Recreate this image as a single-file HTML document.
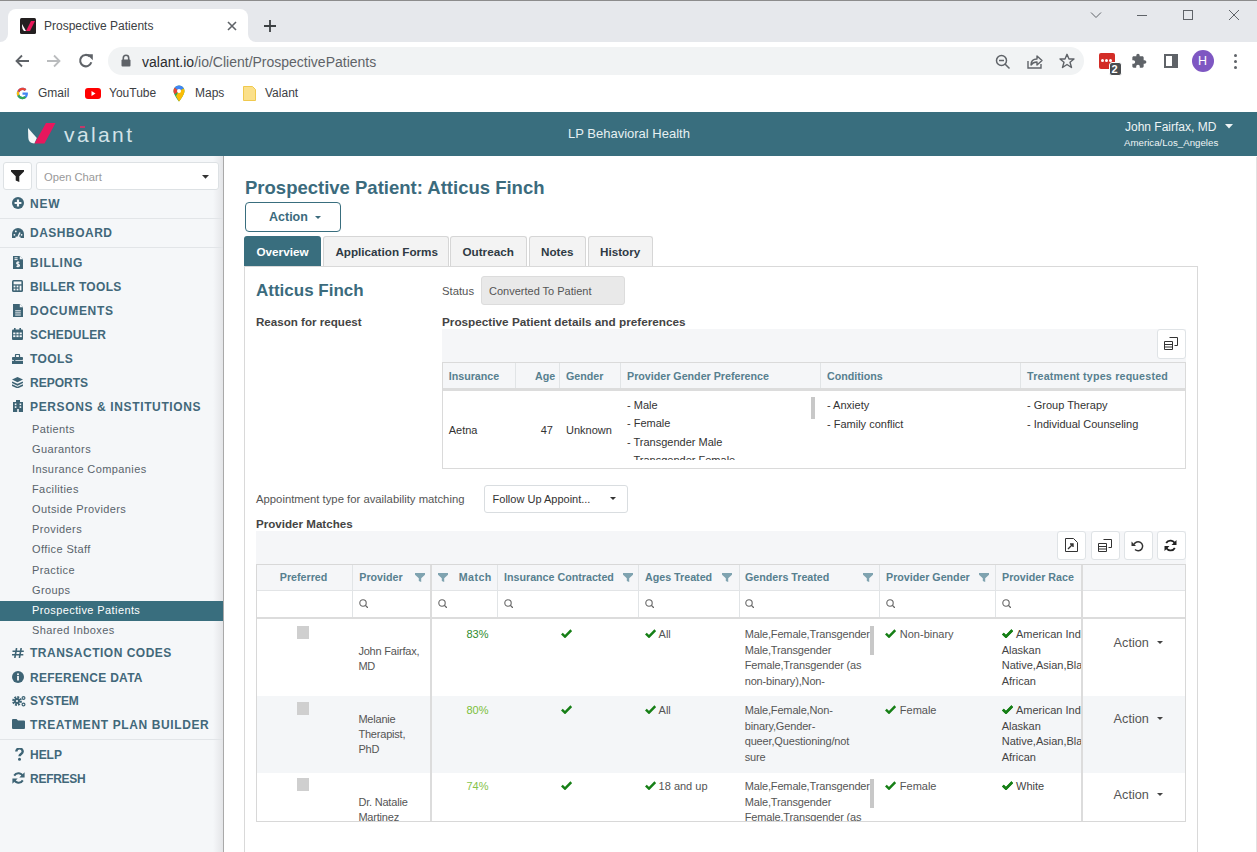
<!DOCTYPE html>
<html><head><meta charset="utf-8">
<style>
*{box-sizing:border-box;margin:0;padding:0}
html,body{width:1257px;height:852px;overflow:hidden;background:#fff;font-family:"Liberation Sans",sans-serif;position:relative}
.a{position:absolute}
.t{position:absolute;white-space:nowrap}
/* chrome */
#tabstrip{left:0;top:0;width:1257px;height:42px;background:#dee1e6;border-top:1px solid #9a9a9a}
#acttab{left:8px;top:8px;width:240px;height:34px;background:#fff;border-radius:8px 8px 0 0}
#toolbar{left:0;top:42px;width:1257px;height:36px;background:#fff}
#omni{left:108px;top:46px;width:977px;height:29px;background:#f1f3f4;border-radius:15px}
#bookmarks{left:0;top:78px;width:1257px;height:34px;background:#fff}
/* valant header */
#vhead{left:0;top:112px;width:1257px;height:44px;background:#3d6d7e}
#side{left:0;top:156px;width:223px;height:696px;background:#f3f5f7;border-right:1px solid #d5d8db}
.nav{position:absolute;left:30px;font-weight:bold;font-size:12px;color:#42687a;white-space:nowrap}
.sub{position:absolute;left:32px;font-size:11px;color:#59636b;letter-spacing:0.4px;white-space:nowrap}
.ico{position:absolute;left:12px}
</style></head>
<body>
<!-- CHROME -->
<div class="a" style="left:0;top:0;width:1257px;height:42px;background:#e6e8ec"></div>
<div class="a" style="left:0;top:0;width:1257px;height:1px;background:#8c8c8c"></div>
<div class="a" style="left:8px;top:9px;width:240px;height:33px;background:#fff;border-radius:8px 8px 0 0"></div>
<!-- tab bottom curves -->
<div class="a" style="left:0;top:34px;width:8px;height:8px;background:#fff"></div>
<div class="a" style="left:0;top:26px;width:8px;height:16px;background:#e6e8ec;border-radius:0 0 8px 0"></div>
<div class="a" style="left:248px;top:34px;width:8px;height:8px;background:#fff"></div>
<div class="a" style="left:248px;top:26px;width:8px;height:16px;background:#e6e8ec;border-radius:0 0 0 8px"></div>
<!-- favicon -->
<svg class="a" style="left:20px;top:18px" width="16" height="16" viewBox="0 0 16 16"><rect width="16" height="16" rx="1.5" fill="#231f20"/><path d="M2 6 L6 13 L4 13 Q2 11 2 8Z" fill="#fff"/><path d="M6 13 L11 3 L15 3 L10 13Z" fill="#e8185a"/></svg>
<div class="t" style="left:44px;top:19px;font-size:12px;color:#3c4043">Prospective Patients</div>
<svg class="a" style="left:227px;top:21px" width="10" height="10" viewBox="0 0 10 10"><path d="M1 1L9 9M9 1L1 9" stroke="#5f6368" stroke-width="1.6"/></svg>
<svg class="a" style="left:263px;top:19px" width="14" height="14" viewBox="0 0 14 14"><path d="M7 1V13M1 7H13" stroke="#3c4043" stroke-width="1.8"/></svg>
<!-- window controls -->
<svg class="a" style="left:1090px;top:11px" width="12" height="8" viewBox="0 0 12 8"><path d="M1 1.5L6 6.5L11 1.5" stroke="#5f6368" stroke-width="1" fill="none"/></svg>
<div class="a" style="left:1137px;top:15px;width:10px;height:1px;background:#5f6368"></div>
<div class="a" style="left:1183px;top:10px;width:10px;height:10px;border:1px solid #5f6368"></div>
<svg class="a" style="left:1228px;top:9px" width="12" height="12" viewBox="0 0 12 12"><path d="M1 1L11 11M11 1L1 11" stroke="#5f6368" stroke-width="1"/></svg>
<!-- toolbar -->
<svg class="a" style="left:14px;top:53px" width="16" height="16" viewBox="0 0 16 16"><path d="M15 8H2.5M8 2.5L2.5 8L8 13.5" stroke="#5f6368" stroke-width="1.8" fill="none"/></svg>
<svg class="a" style="left:46px;top:53px" width="16" height="16" viewBox="0 0 16 16"><path d="M1 8H13.5M8 2.5L13.5 8L8 13.5" stroke="#babcbe" stroke-width="1.8" fill="none"/></svg>
<svg class="a" style="left:78px;top:53px" width="16" height="16" viewBox="0 0 16 16"><path d="M13.3 9.3A5.7 5.7 0 1 1 11.8 3.5" stroke="#5f6368" stroke-width="2.1" fill="none"/><path d="M8.8 1.2H14.8V7.2Z" fill="#5f6368"/></svg>
<div class="a" style="left:108px;top:47px;width:976px;height:28px;background:#f1f3f4;border-radius:14px"></div>
<svg class="a" style="left:121px;top:54px" width="10" height="13" viewBox="0 0 10 13"><path d="M2.3 6V4A2.7 2.7 0 0 1 7.7 4V6" stroke="#5f6368" stroke-width="1.6" fill="none"/><rect x="0.5" y="5.5" width="9" height="7" rx="1" fill="#5f6368"/></svg>
<div class="t" style="left:142px;top:54px;font-size:14px;color:#2a2b2e">valant.io<span style="color:#5f6368">/io/Client/ProspectivePatients</span></div>
<svg class="a" style="left:995px;top:54px" width="16" height="16" viewBox="0 0 16 16"><circle cx="6.5" cy="6.5" r="5" stroke="#5f6368" stroke-width="1.5" fill="none"/><path d="M10 10L14.5 14.5M4 6.5H9" stroke="#5f6368" stroke-width="1.5"/></svg>
<svg class="a" style="left:1026px;top:53px" width="18" height="16" viewBox="0 0 18 16"><path d="M2 8V15H15V11" stroke="#5f6368" stroke-width="1.4" fill="none"/><path d="M5 12Q5 6 11 6V3L16 7.5L11 12V9Q7 9 5 12Z" stroke="#5f6368" stroke-width="1.4" fill="none" stroke-linejoin="round"/></svg>
<svg class="a" style="left:1059px;top:53px" width="16" height="16" viewBox="0 0 16 16"><path d="M8 1.3L10 6H15L11 9.2L12.5 14.5L8 11.5L3.5 14.5L5 9.2L1 6H6Z" stroke="#5f6368" stroke-width="1.4" fill="none" stroke-linejoin="round"/></svg>
<!-- lastpass -->
<div class="a" style="left:1099px;top:53px;width:16px;height:16px;background:#d32d27;border-radius:2px"></div>
<div class="a" style="left:1101px;top:59px;width:3px;height:3px;background:#fff;border-radius:50%"></div>
<div class="a" style="left:1105px;top:59px;width:3px;height:3px;background:#fff;border-radius:50%"></div>
<div class="a" style="left:1109px;top:59px;width:3px;height:3px;background:#fff;border-radius:50%"></div>
<div class="a" style="left:1108.5px;top:62px;width:13px;height:14px;background:#4a4d50;border-radius:3px;border:1px solid #fff"></div>
<div class="t" style="left:1111.5px;top:62.5px;font-size:11px;font-weight:bold;color:#fff">2</div>
<svg class="a" style="left:1131px;top:53px" width="16" height="16" viewBox="0 0 24 24"><path d="M20.5 11H19V7c0-1.1-.9-2-2-2h-4V3.5C13 2.12 11.88 1 10.5 1S8 2.12 8 3.5V5H4c-1.1 0-1.99.9-1.99 2v3.8H3.5c1.49 0 2.7 1.21 2.7 2.7s-1.21 2.7-2.7 2.7H2V20c0 1.1.9 2 2 2h3.8v-1.5c0-1.490 1.21-2.7 2.7-2.7 1.49 0 2.7 1.21 2.7 2.7V22H17c1.1 0 2-.9 2-2v-4h1.5c1.38 0 2.5-1.12 2.5-2.5S21.88 11 20.5 11z" fill="#5f6368"/></svg>
<div class="a" style="left:1164px;top:54px;width:14px;height:14px;border:2px solid #5f6368;border-right:6px solid #5f6368"></div>
<div class="a" style="left:1192px;top:50px;width:22px;height:22px;background:#7e57c2;border-radius:50%"></div>
<div class="t" style="left:1198px;top:54px;font-size:12.5px;color:#fff">H</div>
<div class="a" style="left:1234px;top:54px;width:3px;height:3px;background:#5f6368;border-radius:50%"></div>
<div class="a" style="left:1234px;top:60px;width:3px;height:3px;background:#5f6368;border-radius:50%"></div>
<div class="a" style="left:1234px;top:66px;width:3px;height:3px;background:#5f6368;border-radius:50%"></div>
<!-- bookmarks -->
<svg class="a" style="left:15.5px;top:86.5px" width="13" height="13" viewBox="0 0 48 48"><path d="M43.6 20H24v8.5h11.3C34.2 33.4 29.6 36.5 24 36.5c-6.9 0-12.5-5.6-12.5-12.5S17.1 11.5 24 11.5c3.1 0 6 1.1 8.2 3l6-6C34.4 5 29.5 3 24 3 12.4 3 3 12.4 3 24s9.4 21 21 21c10.5 0 20-7.5 20-21 0-1.3-.1-2.6-.4-4z" fill="#4285f4"/><path d="M6.3 14.7l7 5.1C15.2 15.1 19.3 11.5 24 11.5c3.1 0 6 1.1 8.2 3l6-6C34.4 5 29.5 3 24 3 16 3 9.1 7.5 6.3 14.7z" fill="#ea4335"/><path d="M24 45c5.4 0 10.3-1.8 14.1-5.1l-6.8-5.6C29.3 35.7 26.8 36.5 24 36.5c-5.5 0-10.2-3.6-11.8-8.6l-7 5.4C8.7 40.4 15.8 45 24 45z" fill="#34a853"/><path d="M12.2 27.9c-.4-1.2-.7-2.5-.7-3.9s.3-2.7.7-3.9l-7-5.4C3.8 17.5 3 20.7 3 24s.8 6.5 2.2 9.3z" fill="#fbbc05"/></svg>
<div class="t" style="left:38px;top:86px;font-size:12px;color:#3c4043">Gmail</div>
<div class="a" style="left:85px;top:88px;width:16px;height:11px;background:#f00;border-radius:3px"></div>
<svg class="a" style="left:85px;top:88px" width="16" height="11" viewBox="0 0 16 11"><path d="M6.5 3L10.5 5.5L6.5 8Z" fill="#fff"/></svg>
<div class="t" style="left:109px;top:86px;font-size:12px;color:#3c4043">YouTube</div>
<svg class="a" style="left:173px;top:85px" width="12" height="17" viewBox="0 0 12 17"><path d="M6 0.5A5.5 5.5 0 0 0 0.5 6C0.5 10 6 16.5 6 16.5S11.5 10 11.5 6A5.5 5.5 0 0 0 6 0.5Z" fill="#34a853"/><path d="M6 0.5A5.5 5.5 0 0 0 1.5 2.8L6 6L10.8 3.5A5.5 5.5 0 0 0 6 0.5Z" fill="#4285f4"/><path d="M1.5 2.8A5.5 5.5 0 0 0 0.5 6C0.5 7 0.9 8.2 1.5 9.3L6 6Z" fill="#ea4335"/><path d="M10.8 3.5L6 6L3 11L6 16.5S11.5 10 11.5 6C11.5 5.1 11.2 4.3 10.8 3.5Z" fill="#fbbc04"/><circle cx="6" cy="6" r="2" fill="#fff"/></svg>
<div class="t" style="left:195px;top:86px;font-size:12px;color:#3c4043">Maps</div>
<svg class="a" style="left:243px;top:86px" width="13" height="15" viewBox="0 0 13 15"><path d="M0.5 0.5H9.5L12.5 3.5V14.5H0.5Z" fill="#fbe08a" stroke="#f0c94e" stroke-width="1"/></svg>
<div class="t" style="left:265px;top:86px;font-size:12px;color:#3c4043">Valant</div>
<!-- VALANT HEADER -->
<div class="a" style="left:0;top:112px;width:1257px;height:44px;background:#396e7e"></div>
<svg class="a" style="left:26px;top:122px" width="32" height="23" viewBox="0 0 32 23"><path d="M2 6 L10.8 16 L8.4 21.6 Q2.5 21.2 2.3 16 Z" fill="#f4f7f8"/><path d="M20 1 L29.5 1 L18.5 21.6 L8.5 21.6 Z" fill="#e8175d"/></svg>
<div class="t" style="left:64px;top:123px;font-size:21px;color:#d3e3e8;letter-spacing:2.4px">valant</div>
<div class="a" style="left:80px;top:126px;width:5px;height:1.5px;background:#c0396a"></div>
<div class="t" style="left:568px;top:126px;font-size:13px;color:#e6f0f2">LP Behavioral Health</div>
<div class="t" style="left:1125px;top:120px;font-size:12px;color:#eef4f5">John Fairfax, MD</div>
<svg class="a" style="left:1225px;top:124px" width="8" height="5" viewBox="0 0 8 5"><path d="M0 0H8L4 4.5Z" fill="#eef4f5"/></svg>
<div class="t" style="left:1124px;top:137px;font-size:9.7px;color:#eef4f5">America/Los_Angeles</div>
<!-- SIDEBAR -->
<div class="a" style="left:0;top:156px;width:223px;height:696px;background:#f5f7f9"></div>
<div class="a" style="left:213px;top:156px;width:10px;height:696px;background:linear-gradient(90deg,rgba(230,231,234,0),#e4e5e8)"></div>
<div class="a" style="left:223px;top:156px;width:1px;height:696px;background:#a9a9a9"></div>
<div class="a" style="left:3px;top:162px;width:29px;height:28px;background:#fff;border:1px solid #dde1e4;border-radius:3px"></div>
<svg class="a" style="left:11px;top:170px" width="13" height="12" viewBox="0 0 13 12"><path d="M0 0H13V1.5L8.3 6.3V12L4.7 10.5V6.3L0 1.5Z" fill="#222"/></svg>
<div class="a" style="left:36px;top:162px;width:183px;height:28px;background:#fff;border:1px solid #dde1e4;border-radius:3px"></div>
<div class="t" style="left:44px;top:171px;font-size:11.2px;color:#999">Open Chart</div>
<svg class="a" style="left:202px;top:175px" width="7" height="4" viewBox="0 0 7 4"><path d="M0 0H7L3.5 3.7Z" fill="#333"/></svg>
<div class="a" style="left:0;top:218px;width:223px;height:1px;background:#e2e5e8"></div>
<div class="a" style="left:0;top:247px;width:223px;height:1px;background:#e2e5e8"></div>
<div class="a" style="left:0;top:739px;width:223px;height:1px;background:#e2e5e8"></div>

<div class="nav" style="top:196.9px;letter-spacing:0.75px">NEW</div>
<div class="nav" style="top:225.9px;letter-spacing:0.5px">DASHBOARD</div>
<div class="nav" style="top:255.9px;letter-spacing:0.73px">BILLING</div>
<div class="nav" style="top:279.9px;letter-spacing:0.32px">BILLER TOOLS</div>
<div class="nav" style="top:303.9px;letter-spacing:0.71px">DOCUMENTS</div>
<div class="nav" style="top:327.9px;letter-spacing:0.17px">SCHEDULER</div>
<div class="nav" style="top:351.9px;letter-spacing:0.42px">TOOLS</div>
<div class="nav" style="top:375.9px;letter-spacing:0.0px">REPORTS</div>
<div class="nav" style="top:399.9px;letter-spacing:0.63px">PERSONS &amp; INSTITUTIONS</div>
<div class="sub" style="top:422.8px">Patients</div>
<div class="sub" style="top:442.8px">Guarantors</div>
<div class="sub" style="top:462.8px">Insurance Companies</div>
<div class="sub" style="top:482.8px">Facilities</div>
<div class="sub" style="top:502.8px">Outside Providers</div>
<div class="sub" style="top:522.8px">Providers</div>
<div class="sub" style="top:542.8px">Office Staff</div>
<div class="sub" style="top:563.8px">Practice</div>
<div class="sub" style="top:583.8px">Groups</div>
<div class="a" style="left:0;top:601px;width:223px;height:20px;background:#396e7e"></div>
<div class="sub" style="top:603.8px;color:#fff">Prospective Patients</div>
<div class="sub" style="top:623.8px">Shared Inboxes</div>
<div class="nav" style="top:645.9px;letter-spacing:0.5px">TRANSACTION CODES</div>
<div class="nav" style="top:670.9px;letter-spacing:0.28px">REFERENCE DATA</div>
<div class="nav" style="top:693.9px;letter-spacing:-0.11px">SYSTEM</div>
<div class="nav" style="top:717.9px;letter-spacing:0.62px">TREATMENT PLAN BUILDER</div>
<div class="nav" style="top:747.9px;letter-spacing:-0.03px">HELP</div>
<div class="nav" style="top:771.9px;letter-spacing:-0.27px">REFRESH</div>
<!-- nav icons -->
<svg class="ico" style="top:197px" width="12" height="12" viewBox="0 0 12 12"><circle cx="6" cy="6" r="6" fill="#3e6475"/><path d="M6 2.6V9.4M2.6 6H9.4" stroke="#f5f7f9" stroke-width="2.2"/></svg>
<svg class="ico" style="top:228px" width="12" height="10" viewBox="0 0 12 10"><path d="M0 10V6A6 6 0 0 1 12 6V10Z" fill="#3e6475"/><path d="M6 9L8 4.5" stroke="#f5f7f9" stroke-width="1.4"/><circle cx="2.4" cy="6.8" r="0.9" fill="#f5f7f9"/><circle cx="3.8" cy="3.4" r="0.9" fill="#f5f7f9"/><circle cx="9.6" cy="6.8" r="0.9" fill="#f5f7f9"/><rect x="3.5" y="8.6" width="5" height="1.4" fill="#f5f7f9"/></svg>
<svg class="ico" style="top:256px;left:13px" width="10" height="13" viewBox="0 0 10 13"><path d="M0 0H6.8L10 3.2V13H0Z" fill="#3e6475"/><path d="M6.8 0V3.2H10" fill="#f5f7f9"/><path d="M1.5 1.8H4.6M1.5 3.6H4.6" stroke="#f5f7f9" stroke-width="1"/><path d="M6.3 6.6Q6 6 5 6Q3.6 6 3.6 7.2Q3.6 8.1 5 8.3Q6.5 8.5 6.5 9.5Q6.5 10.5 5 10.5Q4 10.5 3.6 9.9M5 5.2V11.3" stroke="#f5f7f9" stroke-width="1.1" fill="none"/></svg>
<svg class="ico" style="top:280px" width="11" height="12" viewBox="0 0 11 12"><rect x="0" y="0" width="11" height="12" rx="1.5" fill="#3e6475"/><rect x="1.6" y="1.5" width="7.8" height="2.8" fill="#f5f7f9"/><g fill="#f5f7f9"><rect x="1.6" y="5.6" width="1.8" height="1.8"/><rect x="4.6" y="5.6" width="1.8" height="1.8"/><rect x="1.6" y="8.6" width="1.8" height="1.8"/><rect x="4.6" y="8.6" width="1.8" height="1.8"/><rect x="7.6" y="5.6" width="1.8" height="4.8"/></g></svg>
<svg class="ico" style="top:304px;left:13px" width="10" height="13" viewBox="0 0 10 13"><path d="M0 0H6.8L10 3.2V13H0Z" fill="#3e6475"/><path d="M6.8 0V3.2H10" fill="#f5f7f9"/><path d="M2.2 6.8H7.8M2.2 8.9H7.8M2.2 11H7.8" stroke="#f5f7f9" stroke-width="1"/></svg>
<svg class="ico" style="top:328px" width="11" height="12" viewBox="0 0 11 12"><rect y="1.5" width="11" height="10.5" rx="1" fill="#3e6475"/><rect x="2" y="0" width="1.6" height="3" fill="#3e6475"/><rect x="7.4" y="0" width="1.6" height="3" fill="#3e6475"/><g fill="#f5f7f9"><rect x="1.2" y="4.5" width="2.2" height="1.8"/><rect x="4.4" y="4.5" width="2.2" height="1.8"/><rect x="7.6" y="4.5" width="2.2" height="1.8"/><rect x="1.2" y="7.3" width="2.2" height="1.8"/><rect x="4.4" y="7.3" width="2.2" height="1.8"/><rect x="7.6" y="7.3" width="2.2" height="1.8"/></g></svg>
<svg class="ico" style="top:354px" width="11" height="10" viewBox="0 0 11 10"><path d="M3.5 3V1.2Q3.5 0.3 4.4 0.3H6.6Q7.5 0.3 7.5 1.2V3" stroke="#3e6475" stroke-width="1.2" fill="none"/><rect y="3" width="11" height="3" rx="0.8" fill="#3e6475"/><rect y="6.8" width="11" height="3.2" fill="#3e6475"/><rect x="2" y="5.2" width="1.4" height="2.4" fill="#3e6475"/></svg>
<svg class="ico" style="top:377px" width="11" height="11" viewBox="0 0 11 11"><path d="M5.5 0L11 2.6L5.5 5.2L0 2.6Z" fill="#3e6475"/><path d="M0 5.2L5.5 7.8L11 5.2" stroke="#3e6475" stroke-width="1.6" fill="none"/><path d="M0 8L5.5 10.6L11 8" stroke="#3e6475" stroke-width="1.6" fill="none"/></svg>
<svg class="ico" style="top:400px;left:13px" width="10" height="12" viewBox="0 0 10 12"><path d="M3 0H7V2H10V12H0V2H3Z" fill="#3e6475"/><g fill="#f5f7f9"><rect x="1.8" y="3.5" width="1.6" height="1.6"/><rect x="6.6" y="3.5" width="1.6" height="1.6"/><rect x="1.8" y="6.3" width="1.6" height="1.6"/><rect x="6.6" y="6.3" width="1.6" height="1.6"/><rect x="4.2" y="9" width="1.6" height="3"/></g></svg>
<svg class="a" style="left:12px;top:648px" width="12" height="10" viewBox="0 0 12 10"><path d="M4.6 0L2.8 10M9.2 0L7.4 10M0.5 3.2H11.8M0 6.8H11.3" stroke="#3e6475" stroke-width="1.6"/></svg>
<svg class="ico" style="top:671px" width="12" height="12" viewBox="0 0 12 12"><circle cx="6" cy="6" r="6" fill="#3e6475"/><rect x="5.1" y="5" width="1.8" height="4.5" fill="#f5f7f9"/><circle cx="6" cy="3.2" r="1" fill="#f5f7f9"/></svg>
<svg class="ico" style="top:695px" width="14" height="12" viewBox="0 0 14 12"><circle cx="5" cy="6" r="3.6" fill="none" stroke="#3e6475" stroke-width="2.6" stroke-dasharray="1.8 1"/><circle cx="5" cy="6" r="3" fill="#3e6475"/><circle cx="5" cy="6" r="1.1" fill="#f5f7f9"/><circle cx="11.5" cy="3" r="1.4" fill="none" stroke="#3e6475" stroke-width="1.2"/><circle cx="11.5" cy="9.5" r="1.4" fill="none" stroke="#3e6475" stroke-width="1.2"/></svg>
<svg class="ico" style="top:719px" width="13" height="10" viewBox="0 0 13 10"><path d="M0 1Q0 0 1 0H4.5L6 1.5H12Q13 1.5 13 2.5V9Q13 10 12 10H1Q0 10 0 9Z" fill="#3e6475"/></svg>
<svg class="a" style="left:14.5px;top:748px" width="9" height="13" viewBox="0 0 9 13"><path d="M1.3 3.6A3.2 3.2 0 0 1 7.7 3.6C7.7 6 4.5 6 4.5 8.3" stroke="#3e6475" stroke-width="2.4" fill="none"/><circle cx="4.5" cy="11.3" r="1.5" fill="#3e6475"/></svg>
<svg class="ico" style="top:772px" width="13" height="12" viewBox="0 0 13 12"><path d="M11 4.6A4.9 4.9 0 0 0 2.2 3.6M2 7.4A4.9 4.9 0 0 0 10.8 8.4" stroke="#3e6475" stroke-width="2" fill="none"/><path d="M12.6 0.3V5.6H7.3Z M0.4 11.7V6.4H5.7Z" fill="#3e6475"/></svg>

<!-- MAIN -->
<div class="a" style="left:226px;top:156px;width:1031px;height:696px;background:#fff"></div>
<div class="t" style="left:245px;top:177.26px;font-size:18.5px;font-weight:bold;color:#3b6b7d;">Prospective Patient: Atticus Finch</div>
<div class="a" style="left:245px;top:202px;width:96px;height:30px;border:1px solid #396e7e;border-radius:4px;background:#fff"></div>
<div class="t" style="left:269px;top:210.29px;font-size:12.5px;font-weight:bold;color:#3b6b7d;">Action</div>
<svg class="a" style="left:315px;top:216px" width="6" height="3" viewBox="0 0 6 3"><path d="M0 0H6L3 3Z" fill="#3b6b7d"/></svg>
<div class="a" style="left:244px;top:236px;width:77px;height:31px;background:#396e7e;border-radius:3px 3px 0 0"></div>
<div class="t" style="left:256.5px;top:245.41px;font-size:11.7px;font-weight:bold;color:#fff;">Overview</div>
<div class="a" style="left:323px;top:236px;width:126px;height:31px;background:#f3f3f3;border:1px solid #d6d6d6;border-bottom:none;border-radius:3px 3px 0 0"></div>
<div class="t" style="left:335.4px;top:245.41px;font-size:11.7px;font-weight:bold;color:#2f3a44;">Application Forms</div>
<div class="a" style="left:450px;top:236px;width:77px;height:31px;background:#f3f3f3;border:1px solid #d6d6d6;border-bottom:none;border-radius:3px 3px 0 0"></div>
<div class="t" style="left:462.5px;top:245.41px;font-size:11.7px;font-weight:bold;color:#2f3a44;">Outreach</div>
<div class="a" style="left:529px;top:236px;width:57px;height:31px;background:#f3f3f3;border:1px solid #d6d6d6;border-bottom:none;border-radius:3px 3px 0 0"></div>
<div class="t" style="left:541px;top:245.41px;font-size:11.7px;font-weight:bold;color:#2f3a44;">Notes</div>
<div class="a" style="left:588px;top:236px;width:65px;height:31px;background:#f3f3f3;border:1px solid #d6d6d6;border-bottom:none;border-radius:3px 3px 0 0"></div>
<div class="t" style="left:600px;top:245.41px;font-size:11.7px;font-weight:bold;color:#2f3a44;">History</div>
<div class="a" style="left:244px;top:266px;width:954px;height:600px;border:1px solid #d9d9d9;background:#fff"></div>
<div class="t" style="left:256px;top:281.01px;font-size:17px;font-weight:bold;color:#3b6b7d;">Atticus Finch</div>
<div class="t" style="left:442px;top:284.87px;font-size:11.3px;font-weight:normal;color:#555;">Status</div>
<div class="a" style="left:481px;top:276px;width:144px;height:29px;background:#e9e9e9;border:1px solid #dcdcdc;border-radius:3px"></div>
<div class="t" style="left:489px;top:285.15px;font-size:11px;font-weight:normal;color:#555;">Converted To Patient</div>
<div class="t" style="left:256px;top:315.00px;font-size:11.6px;font-weight:bold;color:#444;">Reason for request</div>
<div class="t" style="left:442px;top:314.87px;font-size:11.75px;font-weight:bold;color:#444;">Prospective Patient details and preferences</div>
<div class="a" style="left:442px;top:329px;width:744px;height:34px;background:#f5f6f8"></div>
<div class="a" style="left:1157px;top:329px;width:29px;height:30px;background:#fff;border:1px solid #dfe3e6;border-radius:3px"></div>
<svg class="a" style="left:1164px;top:337px" width="14" height="13" viewBox="0 0 14 13"><path d="M5.5 0.5H13.5V8.5H10.5M0.5 4.5H8.5V12.5H0.5ZM0.5 7.5H8.5M0.5 10H8.5" stroke="#333" stroke-width="1" fill="none"/></svg>
<div class="a" style="left:442px;top:362px;width:744px;height:107px;border:1px solid #dadada;background:#fff"></div>
<div class="a" style="left:443px;top:363px;width:742px;height:26px;background:#f5f6f8"></div>
<div class="a" style="left:443px;top:388px;width:742px;height:3px;background:#dcdcdc"></div>
<div class="a" style="left:515px;top:363px;width:1px;height:25px;background:#e1e4e6"></div>
<div class="a" style="left:559px;top:363px;width:1px;height:25px;background:#e1e4e6"></div>
<div class="a" style="left:620px;top:363px;width:1px;height:25px;background:#e1e4e6"></div>
<div class="a" style="left:820px;top:363px;width:1px;height:25px;background:#e1e4e6"></div>
<div class="a" style="left:1020px;top:363px;width:1px;height:25px;background:#e1e4e6"></div>
<div class="t" style="left:448.7px;top:370.42px;font-size:10.7px;font-weight:bold;color:#57808f;">Insurance</div>
<div class="t" style="left:535px;top:370.42px;font-size:10.7px;font-weight:bold;color:#57808f;width:18px;text-align:right">Age</div>
<div class="t" style="left:566px;top:370.42px;font-size:10.7px;font-weight:bold;color:#57808f;">Gender</div>
<div class="t" style="left:627px;top:370.42px;font-size:10.7px;font-weight:bold;color:#57808f;">Provider Gender Preference</div>
<div class="t" style="left:827px;top:370.42px;font-size:10.7px;font-weight:bold;color:#57808f;">Conditions</div>
<div class="t" style="left:1027px;top:370.42px;font-size:10.7px;font-weight:bold;color:#57808f;letter-spacing:0.2px">Treatment types requested</div>
<div class="t" style="left:448.7px;top:423.85px;font-size:11px;font-weight:normal;color:#333;">Aetna</div>
<div class="t" style="left:540px;top:423.85px;font-size:11px;font-weight:normal;color:#333;width:13px;text-align:right">47</div>
<div class="t" style="left:566px;top:423.85px;font-size:11px;font-weight:normal;color:#333;">Unknown</div>
<div class="a" style="left:621px;top:392px;width:199px;height:68px;overflow:hidden">
<div class="t" style="left:6px;top:7.15px;font-size:11px;color:#333">- Male</div>
<div class="t" style="left:6px;top:25.45px;font-size:11px;color:#333">- Female</div>
<div class="t" style="left:6px;top:43.75px;font-size:11px;color:#333">- Transgender Male</div>
<div class="t" style="left:6px;top:62.05px;font-size:11px;color:#333">- Transgender Female</div>
</div>
<div class="a" style="left:811px;top:397px;width:4px;height:22px;background:#c8c8c8"></div>
<div class="t" style="left:827px;top:399.15px;font-size:11px;font-weight:normal;color:#333;">- Anxiety</div>
<div class="t" style="left:827px;top:417.65px;font-size:11px;font-weight:normal;color:#333;">- Family conflict</div>
<div class="t" style="left:1027px;top:399.15px;font-size:11px;font-weight:normal;color:#333;">- Group Therapy</div>
<div class="t" style="left:1027px;top:417.65px;font-size:11px;font-weight:normal;color:#333;">- Individual Counseling</div>
<div class="t" style="left:256px;top:492.87px;font-size:11.3px;font-weight:normal;color:#555;">Appointment type for availability matching</div>
<div class="a" style="left:484px;top:485px;width:144px;height:28px;background:#fff;border:1px solid #d9dde0;border-radius:3px"></div>
<div class="t" style="left:492.6px;top:493.15px;font-size:11px;font-weight:normal;color:#333;">Follow Up Appoint...</div>
<svg class="a" style="left:610px;top:497px" width="6" height="3" viewBox="0 0 6 3"><path d="M0 0H6L3 3Z" fill="#333"/></svg>
<div class="t" style="left:256px;top:516.50px;font-size:11.6px;font-weight:bold;color:#444;">Provider Matches</div>
<div class="a" style="left:256px;top:531px;width:930px;height:34px;background:#f5f6f8"></div>
<div class="a" style="left:1057px;top:531px;width:29px;height:29px;background:#fff;border:1px solid #dfe3e6;border-radius:3px"></div>
<div class="a" style="left:1091px;top:531px;width:29px;height:29px;background:#fff;border:1px solid #dfe3e6;border-radius:3px"></div>
<div class="a" style="left:1124px;top:531px;width:29px;height:29px;background:#fff;border:1px solid #dfe3e6;border-radius:3px"></div>
<div class="a" style="left:1157px;top:531px;width:29px;height:29px;background:#fff;border:1px solid #dfe3e6;border-radius:3px"></div>
<svg class="a" style="left:1065px;top:538px" width="13" height="14" viewBox="0 0 13 14"><path d="M0.5 0.5H8.5L12.5 4.5V13.5H0.5Z" stroke="#333" fill="none"/><path d="M3 11L8 6M5 6H8V9" stroke="#333" stroke-width="1.4" fill="none"/></svg>
<svg class="a" style="left:1098px;top:539px" width="14" height="13" viewBox="0 0 14 13"><path d="M5.5 0.5H13.5V8.5H10.5M0.5 4.5H8.5V12.5H0.5ZM0.5 7.5H8.5M0.5 10H8.5" stroke="#333" stroke-width="1" fill="none"/></svg>
<svg class="a" style="left:1131px;top:539px" width="13" height="13" viewBox="0 0 13 13"><path d="M3 5.5A4.5 4.5 0 1 1 4 10.5" stroke="#333" stroke-width="1.5" fill="none"/><path d="M0.5 2.5V7H5Z" fill="#333"/></svg>
<svg class="a" style="left:1164px;top:539px" width="13" height="13" viewBox="0 0 13 13"><path d="M11 5A4.8 4.8 0 0 0 2.2 4M2 8A4.8 4.8 0 0 0 10.8 9" stroke="#222" stroke-width="1.8" fill="none"/><path d="M12.5 1V6H7.5Z M0.5 12V7H5.5Z" fill="#222"/></svg>
<div class="a" style="left:256px;top:564px;width:930px;height:258px;border:1px solid #d8d8d8;background:#fff"></div>
<div class="a" style="left:257px;top:565px;width:928px;height:26px;background:#f5f6f8"></div>
<div class="a" style="left:257px;top:590px;width:928px;height:1px;background:#e2e4e6"></div>
<div class="a" style="left:257px;top:617px;width:928px;height:2px;background:#dcdcdc"></div>
<div class="a" style="left:352px;top:565px;width:1px;height:52px;background:#e1e4e6"></div>
<div class="a" style="left:431px;top:565px;width:1px;height:52px;background:#e1e4e6"></div>
<div class="a" style="left:497px;top:565px;width:1px;height:52px;background:#e1e4e6"></div>
<div class="a" style="left:638px;top:565px;width:1px;height:52px;background:#e1e4e6"></div>
<div class="a" style="left:739px;top:565px;width:1px;height:52px;background:#e1e4e6"></div>
<div class="a" style="left:879px;top:565px;width:1px;height:52px;background:#e1e4e6"></div>
<div class="a" style="left:995px;top:565px;width:1px;height:52px;background:#e1e4e6"></div>
<div class="a" style="left:1081px;top:565px;width:1px;height:52px;background:#e1e4e6"></div>
<div class="t" style="left:279.8px;top:570.92px;font-size:10.7px;font-weight:bold;color:#57808f;">Preferred</div>
<div class="t" style="left:359.3px;top:570.92px;font-size:10.7px;font-weight:bold;color:#57808f;">Provider</div>
<div class="t" style="left:458.8px;top:570.92px;font-size:10.7px;font-weight:bold;color:#57808f;letter-spacing:0.4px">Match</div>
<div class="t" style="left:504px;top:570.92px;font-size:10.7px;font-weight:bold;color:#57808f;">Insurance Contracted</div>
<div class="t" style="left:645px;top:570.92px;font-size:10.7px;font-weight:bold;color:#57808f;">Ages Treated</div>
<div class="t" style="left:745px;top:570.92px;font-size:10.7px;font-weight:bold;color:#57808f;">Genders Treated</div>
<div class="t" style="left:886px;top:570.92px;font-size:10.7px;font-weight:bold;color:#57808f;">Provider Gender</div>
<div class="t" style="left:1002px;top:570.92px;font-size:10.7px;font-weight:bold;color:#57808f;">Provider Race</div>
<svg class="a" style="left:414.5px;top:573px" width="10" height="9" viewBox="0 0 10 9"><path d="M0 0H10V1.8L6.2 5.2V9L3.8 8V5.2L0 1.8Z" fill="#7fa3b0"/></svg>
<svg class="a" style="left:437.5px;top:573px" width="10" height="9" viewBox="0 0 10 9"><path d="M0 0H10V1.8L6.2 5.2V9L3.8 8V5.2L0 1.8Z" fill="#7fa3b0"/></svg>
<svg class="a" style="left:622.5px;top:573px" width="10" height="9" viewBox="0 0 10 9"><path d="M0 0H10V1.8L6.2 5.2V9L3.8 8V5.2L0 1.8Z" fill="#7fa3b0"/></svg>
<svg class="a" style="left:721.5px;top:573px" width="10" height="9" viewBox="0 0 10 9"><path d="M0 0H10V1.8L6.2 5.2V9L3.8 8V5.2L0 1.8Z" fill="#7fa3b0"/></svg>
<svg class="a" style="left:862.5px;top:573px" width="10" height="9" viewBox="0 0 10 9"><path d="M0 0H10V1.8L6.2 5.2V9L3.8 8V5.2L0 1.8Z" fill="#7fa3b0"/></svg>
<svg class="a" style="left:978.5px;top:573px" width="10" height="9" viewBox="0 0 10 9"><path d="M0 0H10V1.8L6.2 5.2V9L3.8 8V5.2L0 1.8Z" fill="#7fa3b0"/></svg>
<svg class="a" style="left:359px;top:599px" width="9" height="9" viewBox="0 0 9 9"><circle cx="4" cy="4" r="3.2" stroke="#666" stroke-width="1.1" fill="none"/><path d="M6.4 6.4L9 9" stroke="#666" stroke-width="1.3"/></svg>
<svg class="a" style="left:438px;top:599px" width="9" height="9" viewBox="0 0 9 9"><circle cx="4" cy="4" r="3.2" stroke="#666" stroke-width="1.1" fill="none"/><path d="M6.4 6.4L9 9" stroke="#666" stroke-width="1.3"/></svg>
<svg class="a" style="left:504px;top:599px" width="9" height="9" viewBox="0 0 9 9"><circle cx="4" cy="4" r="3.2" stroke="#666" stroke-width="1.1" fill="none"/><path d="M6.4 6.4L9 9" stroke="#666" stroke-width="1.3"/></svg>
<svg class="a" style="left:645px;top:599px" width="9" height="9" viewBox="0 0 9 9"><circle cx="4" cy="4" r="3.2" stroke="#666" stroke-width="1.1" fill="none"/><path d="M6.4 6.4L9 9" stroke="#666" stroke-width="1.3"/></svg>
<svg class="a" style="left:745px;top:599px" width="9" height="9" viewBox="0 0 9 9"><circle cx="4" cy="4" r="3.2" stroke="#666" stroke-width="1.1" fill="none"/><path d="M6.4 6.4L9 9" stroke="#666" stroke-width="1.3"/></svg>
<svg class="a" style="left:886px;top:599px" width="9" height="9" viewBox="0 0 9 9"><circle cx="4" cy="4" r="3.2" stroke="#666" stroke-width="1.1" fill="none"/><path d="M6.4 6.4L9 9" stroke="#666" stroke-width="1.3"/></svg>
<svg class="a" style="left:1002px;top:599px" width="9" height="9" viewBox="0 0 9 9"><circle cx="4" cy="4" r="3.2" stroke="#666" stroke-width="1.1" fill="none"/><path d="M6.4 6.4L9 9" stroke="#666" stroke-width="1.3"/></svg>
<div class="a" style="left:257px;top:696px;width:928px;height:77px;background:#f4f6f8"></div>
<div class="a" style="left:257px;top:619px;width:928px;height:202px;overflow:hidden">
<div class="a" style="left:40px;top:7px;width:12px;height:13px;background:#cfcfcf"></div>
<div class="t" style="left:101.39999999999998px;top:25.84px;font-size:11px;font-weight:normal;color:#555;letter-spacing:-0.2px">John Fairfax,</div>
<div class="t" style="left:101.39999999999998px;top:40.64px;font-size:11px;font-weight:normal;color:#555;letter-spacing:-0.2px">MD</div>
<div class="t" style="left:209.39999999999998px;top:9.04px;font-size:11px;font-weight:normal;color:#2e8b2e;">83%</div>
<svg class="a" style="left:304px;top:10px" width="11" height="9" viewBox="0 0 11 9"><path d="M0.9 4.6L4 7.6L10.3 1.2" stroke="#167f16" stroke-width="2.5" fill="none"/></svg>
<svg class="a" style="left:388px;top:10px" width="11" height="9" viewBox="0 0 11 9"><path d="M0.9 4.6L4 7.6L10.3 1.2" stroke="#167f16" stroke-width="2.5" fill="none"/></svg>
<div class="t" style="left:401.6px;top:8.54px;font-size:11px;font-weight:normal;color:#555;">All</div>
<div class="t" style="left:487.70000000000005px;top:9.34px;font-size:11px;font-weight:normal;color:#555;letter-spacing:-0.15px">Male,Female,Transgender</div>
<div class="t" style="left:487.70000000000005px;top:24.74px;font-size:11px;font-weight:normal;color:#555;letter-spacing:-0.15px">Male,Transgender</div>
<div class="t" style="left:487.70000000000005px;top:40.14px;font-size:11px;font-weight:normal;color:#555;letter-spacing:-0.15px">Female,Transgender (as</div>
<div class="t" style="left:487.70000000000005px;top:55.54px;font-size:11px;font-weight:normal;color:#555;letter-spacing:-0.15px">non-binary),Non-</div>
<svg class="a" style="left:628px;top:10px" width="11" height="9" viewBox="0 0 11 9"><path d="M0.9 4.6L4 7.6L10.3 1.2" stroke="#167f16" stroke-width="2.5" fill="none"/></svg>
<div class="t" style="left:642.8px;top:9.25px;font-size:11px;font-weight:normal;color:#555;">Non-binary</div>
<svg class="a" style="left:745px;top:10px" width="11" height="9" viewBox="0 0 11 9"><path d="M0.9 4.6L4 7.6L10.3 1.2" stroke="#167f16" stroke-width="2.5" fill="none"/></svg>
<div class="a" style="left:744px;top:0px;width:80px;height:77px;overflow:hidden">
<div class="t" style="left:15px;top:9.25px;font-size:11px;color:#444">American Indian</div>
<div class="t" style="left:0.7px;top:24.70px;font-size:11px;color:#444">Alaskan</div>
<div class="t" style="left:0.7px;top:40.15px;font-size:11px;color:#444">Native,Asian,Black</div>
<div class="t" style="left:0.7px;top:55.60px;font-size:11px;color:#444">African</div>
</div>
<svg class="a" style="left:745px;top:10px" width="11" height="9" viewBox="0 0 11 9"><path d="M0.9 4.6L4 7.6L10.3 1.2" stroke="#167f16" stroke-width="2.5" fill="none"/></svg>
<div class="t" style="left:856.5999999999999px;top:17.21px;font-size:12.7px;font-weight:normal;color:#555;">Action</div>
<svg class="a" style="left:900px;top:22px" width="6" height="3" viewBox="0 0 6 3"><path d="M0 0H6L3 3Z" fill="#444"/></svg>
<div class="a" style="left:40px;top:83px;width:12px;height:13px;background:#cfcfcf"></div>
<div class="t" style="left:101.39999999999998px;top:93.54px;font-size:11px;font-weight:normal;color:#555;letter-spacing:-0.2px">Melanie</div>
<div class="t" style="left:101.39999999999998px;top:109.25px;font-size:11px;font-weight:normal;color:#555;letter-spacing:-0.2px">Therapist,</div>
<div class="t" style="left:101.39999999999998px;top:124.04px;font-size:11px;font-weight:normal;color:#555;letter-spacing:-0.2px">PhD</div>
<div class="t" style="left:209.39999999999998px;top:85.04px;font-size:11px;font-weight:normal;color:#7bbf3a;">80%</div>
<svg class="a" style="left:304px;top:86px" width="11" height="9" viewBox="0 0 11 9"><path d="M0.9 4.6L4 7.6L10.3 1.2" stroke="#167f16" stroke-width="2.5" fill="none"/></svg>
<svg class="a" style="left:388px;top:86px" width="11" height="9" viewBox="0 0 11 9"><path d="M0.9 4.6L4 7.6L10.3 1.2" stroke="#167f16" stroke-width="2.5" fill="none"/></svg>
<div class="t" style="left:401.6px;top:84.54px;font-size:11px;font-weight:normal;color:#555;">All</div>
<div class="t" style="left:487.70000000000005px;top:85.34px;font-size:11px;font-weight:normal;color:#555;letter-spacing:-0.15px">Male,Female,Non-</div>
<div class="t" style="left:487.70000000000005px;top:100.74px;font-size:11px;font-weight:normal;color:#555;letter-spacing:-0.15px">binary,Gender-</div>
<div class="t" style="left:487.70000000000005px;top:116.14px;font-size:11px;font-weight:normal;color:#555;letter-spacing:-0.15px">queer,Questioning/not</div>
<div class="t" style="left:487.70000000000005px;top:131.54px;font-size:11px;font-weight:normal;color:#555;letter-spacing:-0.15px">sure</div>
<svg class="a" style="left:628px;top:86px" width="11" height="9" viewBox="0 0 11 9"><path d="M0.9 4.6L4 7.6L10.3 1.2" stroke="#167f16" stroke-width="2.5" fill="none"/></svg>
<div class="t" style="left:642.8px;top:85.25px;font-size:11px;font-weight:normal;color:#555;">Female</div>
<svg class="a" style="left:745px;top:86px" width="11" height="9" viewBox="0 0 11 9"><path d="M0.9 4.6L4 7.6L10.3 1.2" stroke="#167f16" stroke-width="2.5" fill="none"/></svg>
<div class="a" style="left:744px;top:76px;width:80px;height:77px;overflow:hidden">
<div class="t" style="left:15px;top:9.25px;font-size:11px;color:#444">American Indian</div>
<div class="t" style="left:0.7px;top:24.70px;font-size:11px;color:#444">Alaskan</div>
<div class="t" style="left:0.7px;top:40.15px;font-size:11px;color:#444">Native,Asian,Black</div>
<div class="t" style="left:0.7px;top:55.60px;font-size:11px;color:#444">African</div>
</div>
<svg class="a" style="left:745px;top:86px" width="11" height="9" viewBox="0 0 11 9"><path d="M0.9 4.6L4 7.6L10.3 1.2" stroke="#167f16" stroke-width="2.5" fill="none"/></svg>
<div class="t" style="left:856.5999999999999px;top:93.21px;font-size:12.7px;font-weight:normal;color:#555;">Action</div>
<svg class="a" style="left:900px;top:98px" width="6" height="3" viewBox="0 0 6 3"><path d="M0 0H6L3 3Z" fill="#444"/></svg>
<div class="a" style="left:40px;top:159px;width:12px;height:13px;background:#cfcfcf"></div>
<div class="t" style="left:101.39999999999998px;top:177.44px;font-size:11px;font-weight:normal;color:#555;letter-spacing:-0.2px">Dr. Natalie</div>
<div class="t" style="left:101.39999999999998px;top:192.25px;font-size:11px;font-weight:normal;color:#555;letter-spacing:-0.2px">Martinez</div>
<div class="t" style="left:209.39999999999998px;top:161.04px;font-size:11px;font-weight:normal;color:#86c24a;">74%</div>
<svg class="a" style="left:304px;top:162px" width="11" height="9" viewBox="0 0 11 9"><path d="M0.9 4.6L4 7.6L10.3 1.2" stroke="#167f16" stroke-width="2.5" fill="none"/></svg>
<svg class="a" style="left:388px;top:162px" width="11" height="9" viewBox="0 0 11 9"><path d="M0.9 4.6L4 7.6L10.3 1.2" stroke="#167f16" stroke-width="2.5" fill="none"/></svg>
<div class="t" style="left:401.6px;top:160.54px;font-size:11px;font-weight:normal;color:#555;">18 and up</div>
<div class="t" style="left:487.70000000000005px;top:161.34px;font-size:11px;font-weight:normal;color:#555;letter-spacing:-0.15px">Male,Female,Transgender</div>
<div class="t" style="left:487.70000000000005px;top:176.74px;font-size:11px;font-weight:normal;color:#555;letter-spacing:-0.15px">Male,Transgender</div>
<div class="t" style="left:487.70000000000005px;top:192.14px;font-size:11px;font-weight:normal;color:#555;letter-spacing:-0.15px">Female,Transgender (as</div>
<svg class="a" style="left:628px;top:162px" width="11" height="9" viewBox="0 0 11 9"><path d="M0.9 4.6L4 7.6L10.3 1.2" stroke="#167f16" stroke-width="2.5" fill="none"/></svg>
<div class="t" style="left:642.8px;top:161.25px;font-size:11px;font-weight:normal;color:#555;">Female</div>
<svg class="a" style="left:745px;top:162px" width="11" height="9" viewBox="0 0 11 9"><path d="M0.9 4.6L4 7.6L10.3 1.2" stroke="#167f16" stroke-width="2.5" fill="none"/></svg>
<div class="a" style="left:744px;top:152px;width:80px;height:77px;overflow:hidden">
<div class="t" style="left:15px;top:9.25px;font-size:11px;color:#444">White</div>
</div>
<svg class="a" style="left:745px;top:162px" width="11" height="9" viewBox="0 0 11 9"><path d="M0.9 4.6L4 7.6L10.3 1.2" stroke="#167f16" stroke-width="2.5" fill="none"/></svg>
<div class="t" style="left:856.5999999999999px;top:169.21px;font-size:12.7px;font-weight:normal;color:#555;">Action</div>
<svg class="a" style="left:900px;top:174px" width="6" height="3" viewBox="0 0 6 3"><path d="M0 0H6L3 3Z" fill="#444"/></svg>
<div class="a" style="left:613px;top:7px;width:4px;height:29px;background:#c8c8c8"></div>
<div class="a" style="left:613px;top:160px;width:4px;height:29px;background:#c8c8c8"></div>
</div>
<div class="a" style="left:430px;top:565px;width:2px;height:256px;background:#dcdcdc"></div>
<div class="a" style="left:1081px;top:565px;width:2px;height:256px;background:#dcdcdc"></div>
<div class="a" style="left:1256px;top:157px;width:1px;height:695px;background:#e2e2e2"></div>
</body></html>
